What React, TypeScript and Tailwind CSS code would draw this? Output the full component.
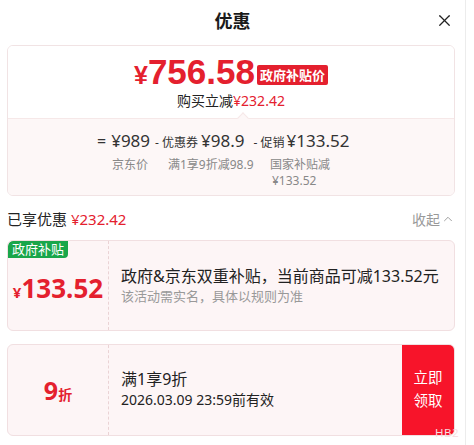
import { X, ChevronUp } from "lucide-react";

const font = { fontFamily: '"Noto Sans", "Noto Sans CJK SC", sans-serif' };
const priceFont = { fontFamily: '"Liberation Sans", "Noto Sans", sans-serif' };

export default function App() {
  return (
    <div
      className="w-[474px] h-[445px] bg-white overflow-hidden flex"
      style={font}
    >
      <div className="w-[466px] border-r border-[#ececec] px-[7px] relative">
        {/* header */}
        <div className="h-[42px] flex items-center justify-center relative">
          <span className="text-[18px] font-bold text-[#1a1a1a]">优惠</span>
          <X
            className="absolute right-[4px] top-[11px] text-[#222]"
            size={19}
            strokeWidth={1.6}
          />
        </div>

        {/* summary card */}
        <div className="mt-[3px] w-[448px] border border-[#f1e3e4] rounded-[6px] overflow-hidden">
          <div className="bg-white flex flex-col items-center pt-[9px] h-[72px]">
            <div className="flex items-center gap-[2px] h-[36px]">
              <span
                className="text-[#e4202e] font-bold text-[35px] leading-[36px]"
                style={priceFont}
              >
                <span className="text-[25px]">¥</span>756.58
              </span>
              <span className="bg-[#e4202e] text-white text-[13px] font-bold px-[3px] rounded-[2px] leading-[20px] mt-[3px]">
                政府补贴价
              </span>
            </div>
            <div className="flex text-[14px] leading-[18px] mt-[1px]">
              <span className="text-[#222]">购买立减</span>
              <span className="text-[#e4202e]">¥232.42</span>
            </div>
          </div>
          <div className="relative bg-[#fdf7f7] border-t border-[#f6e8e8] h-[77px] pl-[89px]">
            <div className="absolute left-[231px] -top-[5px] w-[8px] h-[8px] bg-[#fdf7f7] border-l border-t border-[#f6e8e8] rotate-45" />
            <div className="flex items-baseline text-[#333] pt-[10px] leading-[24px]">
              <span className="text-[16px] mr-[5px]">=</span>
              <span className="text-[17px]">¥989</span>
              <span className="text-[12px] ml-[5px]">- 优惠券</span>
              <span className="text-[17px] ml-[3px]">¥98.9</span>
              <span className="text-[12px] ml-[9px]">- 促销</span>
              <span className="text-[17px] ml-[2px]">¥133.52</span>
            </div>
            <div className="flex text-[12px] text-[#888] leading-[16px] mt-[2px]">
              <span className="ml-[15px] w-[56px]">京东价</span>
              <span className="w-[102px]">满1享9折减98.9</span>
              <span>
                国家补贴减
                <br />
                <span className="ml-[2px]">¥133.52</span>
              </span>
            </div>
          </div>
        </div>

        {/* summary line */}
        <div className="w-[448px] flex items-center justify-between mt-[12px] h-[22px]">
          <span className="text-[15px] text-[#222]">
            已享优惠 <span className="text-[#e4202e]">¥232.42</span>
          </span>
          <span className="text-[14px] text-[#999] flex items-center gap-[1px]">
            收起
            <ChevronUp size={14} strokeWidth={1.6} />
          </span>
        </div>

        {/* subsidy card */}
        <div className="mt-[10px] w-[448px] h-[91px] border border-[#f1dfe1] bg-[#fdf5f6] rounded-[6px] flex relative overflow-hidden">
          <span className="absolute left-0 top-0 bg-[#19a64a] text-white text-[13px] leading-[17px] px-[4px] rounded-br-[4px] rounded-tl-[5px]">
            政府补贴
          </span>
          <div className="w-[101px] border-r border-dashed border-[#ead3d5] flex items-center justify-center pt-[5px]">
            <span className="text-[#e4202e] font-bold text-[26px] leading-none">
              <span className="text-[15px]">¥</span>133.52
            </span>
          </div>
          <div className="flex flex-col justify-center pl-[12px] pb-[2px]">
            <div className="text-[16px] text-[#222] leading-[22px] whitespace-nowrap">
              政府&amp;京东双重补贴，当前商品可减133.52元
            </div>
            <div className="text-[13px] text-[#999] leading-[18px]">
              该活动需实名，具体以规则为准
            </div>
          </div>
        </div>

        {/* coupon card */}
        <div className="mt-[13px] w-[448px] h-[92px] border border-[#f1dfe1] bg-[#fdf5f6] rounded-[6px] flex overflow-hidden">
          <div className="w-[101px] border-r border-dashed border-[#ead3d5] flex items-center justify-center">
            <span className="text-[#e4202e] font-bold leading-none">
              <span className="text-[25px]">9</span>
              <span className="text-[14px]">折</span>
            </span>
          </div>
          <div className="flex-1 flex flex-col justify-center pl-[12px] pb-[2px]">
            <div className="text-[16px] text-[#222] leading-[22px]">满1享9折</div>
            <div className="text-[14px] text-[#222] leading-[20px]">
              2026.03.09 23:59前有效
            </div>
          </div>
          <div className="w-[52px] bg-[#f7142a] flex items-center justify-center pb-[2px]">
            <span className="text-white text-[14.5px] leading-[23px] text-center">
              立即
              <br />
              领取
            </span>
          </div>
        </div>
        <span className="absolute left-[435px] top-[424px] text-[11.5px] text-[#f6dfe1] tracking-[0.5px]">
          HB2
        </span>
      </div>
    </div>
  );
}
